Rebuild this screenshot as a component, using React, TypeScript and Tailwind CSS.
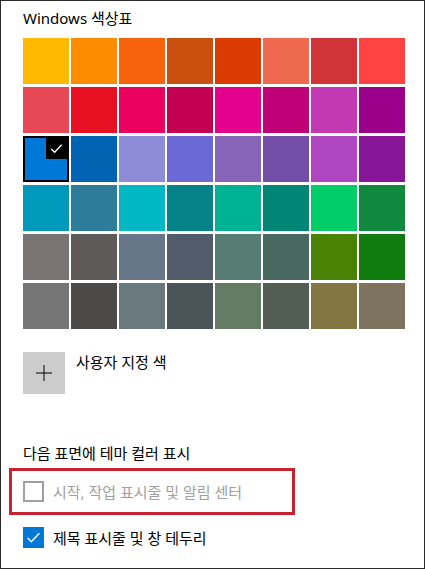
const rows: string[][] = [
  ['#FFB900', '#FF8C00', '#F7630C', '#CA5010', '#DA3B01', '#EF6950', '#D13438', '#FF4343'],
  ['#E74856', '#E81123', '#EA005E', '#C30052', '#E3008C', '#BF0077', '#C239B3', '#9A0089'],
  ['#0078D7', '#0063B1', '#8E8CD8', '#6B69D6', '#8764B8', '#744DA9', '#B146C2', '#881798'],
  ['#0099BC', '#2D7D9A', '#00B7C3', '#038387', '#00B294', '#018574', '#00CC6A', '#10893E'],
  ['#7A7574', '#5D5A58', '#68768A', '#515C6B', '#567C73', '#486860', '#498205', '#107C10'],
  ['#767676', '#4C4A48', '#69797E', '#4A5459', '#647C64', '#525E54', '#847545', '#7E735F'],
];

const font = { fontFamily: '"Noto Sans", "Noto Sans CJK KR", sans-serif' };

function Check({ className }: { className?: string }) {
  return (
    <svg viewBox="0 0 16 16" className={className} fill="none" stroke="white" strokeWidth={1.4}>
      <path d="M2.5 8.5l3.5 3.5 7.5-8" />
    </svg>
  );
}

export default function App() {
  const selected = '#0078D7';
  return (
    <div className="w-[425px] h-[569px] bg-white border border-[#2b2b2b] pl-[22px] pt-[7px] text-black" style={font}>
      <h2 className="text-[15px] leading-[20px] font-normal">Windows 색상표</h2>

      <div className="mt-[10px] grid grid-cols-[repeat(8,46px)] auto-rows-[46px] gap-x-[2px] gap-y-[3px]">
        {rows.flat().map(c =>
          c === selected ? (
            <div key={c} className="relative border-2 border-black" style={{ background: c }}>
              <div className="absolute top-0 right-0 w-[21px] h-[21px] bg-black flex items-center justify-center">
                <Check className="w-[15px] h-[15px]" />
              </div>
            </div>
          ) : (
            <div key={c} style={{ background: c }} />
          )
        )}
      </div>

      <div className="mt-[23px] flex items-start gap-[11px]">
        <button className="w-[42px] h-[42px] bg-[#cccccc] flex items-center justify-center">
          <svg viewBox="0 0 18 18" className="w-[18px] h-[18px]" stroke="black" strokeWidth={1}>
            <path d="M9 1v16M1 9h16" />
          </svg>
        </button>
        <span className="text-[15px] leading-[20px]">사용자 지정 색</span>
      </div>

      <p className="mt-[49px] text-[15px] leading-[20px]">다음 표면에 테마 컬러 표시</p>

      <div className="mt-[5px] -ml-[14px] w-[286px] h-[47px] border-[3px] border-[#c7232f] flex items-center pl-[11px] gap-[9px]">
        <span className="w-[21px] h-[21px] border-2 border-[#a0a0a0] bg-white" />
        <span className="text-[15px] leading-[20px] text-[#a0a0a0]">시작, 작업 표시줄 및 알림 센터</span>
      </div>

      <div className="mt-[12px] flex items-center gap-[9px]">
        <span className="w-[21px] h-[21px] bg-[#0078d7] flex items-center justify-center">
          <Check className="w-[17px] h-[17px]" />
        </span>
        <span className="text-[15px] leading-[20px]">제목 표시줄 및 창 테두리</span>
      </div>
    </div>
  );
}
